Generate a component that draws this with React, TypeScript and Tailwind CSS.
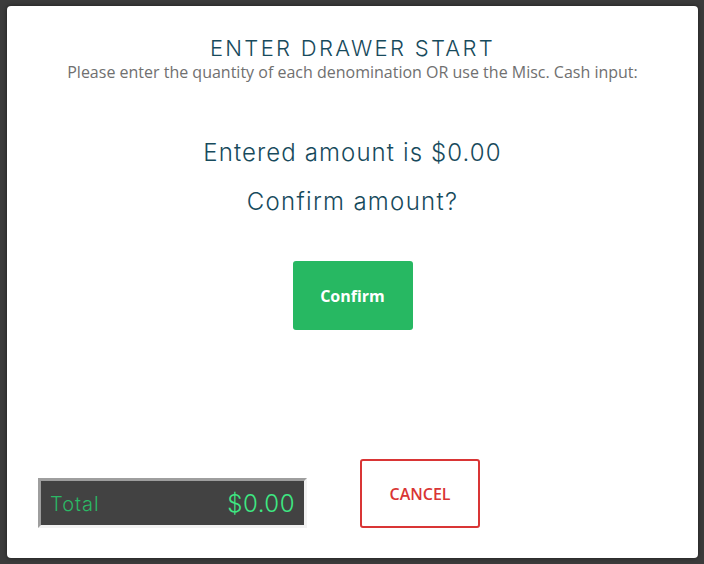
import React from 'react';

const heading = { fontFamily: 'Inter, "DejaVu Sans", sans-serif' };
const body = { fontFamily: '"Open Sans", "Noto Sans", sans-serif' };

export default function App() {
  return (
    <div className="h-[564px] w-[704px] bg-[#3b3b3b] pt-[6px] pb-[6px] pl-[7px] pr-[6px]">
      <div className="flex h-full flex-col rounded-[4px] bg-white shadow-[0_0_4px_rgba(0,0,0,0.5)]">
        <div className="pt-[31px] text-center">
          <h1 className="text-[22px] leading-[22px] font-light tracking-[2.3px] text-[#174a5c]" style={heading}>
            ENTER DRAWER START
          </h1>
          <p className="mt-[2px] text-[16px] leading-[22px] text-[#707070]" style={body}>
            Please enter the quantity of each denomination OR use the Misc. Cash input:
          </p>
        </div>

        <div className="mt-[55px] flex flex-col items-center text-[#174a5c]" style={heading}>
          <p className="text-[24px] leading-[30px] font-light tracking-[1.1px]">Entered amount is $0.00</p>
          <p className="mt-[19px] text-[24px] leading-[30px] font-light tracking-[1.3px]">Confirm amount?</p>
          <button
            className="mt-[44px] h-[69px] w-[120px] rounded-[3px] bg-[#27b862] text-[16px] font-bold text-white"
            style={body}
          >
            Confirm
          </button>
        </div>

        <div className="mt-auto flex items-end pb-[30px] pl-[31px]">
          <div
            className="flex h-[50px] w-[269px] items-center justify-between border-[3px] border-t-[#9e9e9e] border-l-[#9e9e9e] border-r-[#f2f2f2] border-b-[#f2f2f2] bg-[#424242] pt-[2px] pl-[9px] pr-[9px]"
            style={heading}
          >
            <span className="text-[20px] font-light tracking-[1px] text-[#2bb865]">Total</span>
            <span className="text-[24px] font-light tracking-[0.5px] text-[#3ee882]">$0.00</span>
          </div>
          <button
            className="ml-[53px] h-[69px] w-[120px] rounded-[3px] border-2 border-[#d93535] bg-white text-[16px] font-semibold text-[#d93535]"
            style={body}
          >
            CANCEL
          </button>
        </div>
      </div>
    </div>
  );
}
